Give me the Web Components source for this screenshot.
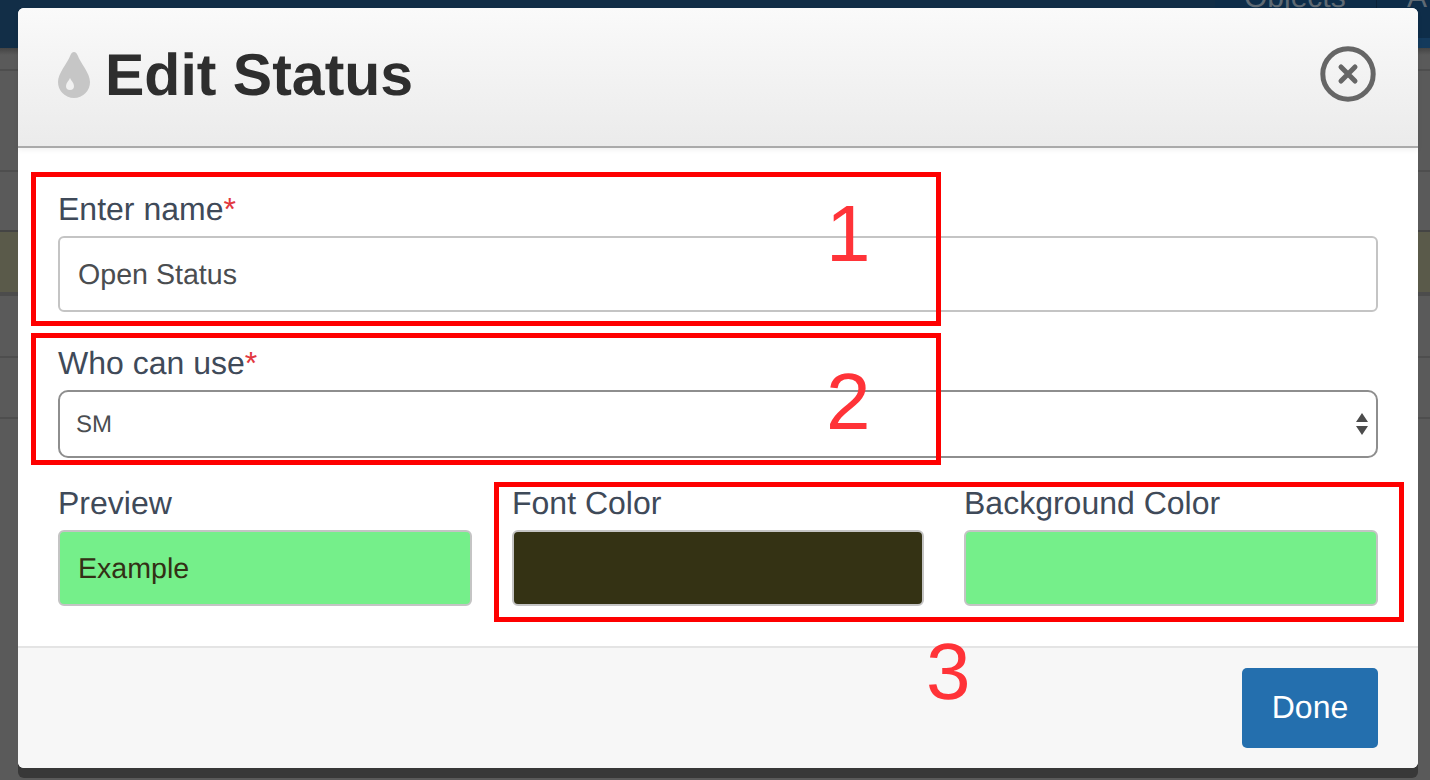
<!doctype html>
<html>
<head>
<meta charset="utf-8">
<title>Edit Status</title>
<style>
html, body { margin: 0; height: 100%; overflow: hidden; background: #5a5a5a; }
body { font-family: "Liberation Sans", Arial, sans-serif; text-rendering: geometricPrecision; }
</style>
</head>
<body>
<app-backdrop></app-backdrop>

<edit-modal heading="Edit Status">
  <form-field label="Enter name" required>
    <text-box>Open Status</text-box>
  </form-field>
  <form-field label="Who can use" required>
    <select-box>SM</select-box>
  </form-field>
  <color-row>
    <form-field label="Preview" last>
      <text-box color="#333015" fill="#75ef8a">Example</text-box>
    </form-field>
    <form-field label="Font Color" last>
      <text-box fill="#343214"></text-box>
    </form-field>
    <form-field label="Background Color" last>
      <text-box fill="#75ef8a"></text-box>
    </form-field>
  </color-row>
  <primary-button slot="footer">Done</primary-button>
</edit-modal>

<note-box number="1" box="31,172,910,154" digit="826,194"></note-box>
<note-box number="2" box="31,333,910,132" digit="826,362"></note-box>
<note-box number="3" box="494,482,910,140" digit="926,632"></note-box>

<script type="module">
const BACKDROP = document.createElement('template');
BACKDROP.innerHTML = /* html */ `
<style>
:host {
  position: fixed;
  inset: 0;
  display: block;
  overflow: hidden;
  background: #5a5a5a;
}

nav {
  display: flex;
  height: 48px;
  background: linear-gradient(#0e2d49 0, #0e2d49 38px, #143a5c 38px, #143a5c 100%);
}

.brand { width: 1215px; background: #122e47; }

.tab {
  box-sizing: border-box;
  width: 162px;
  height: 48px;
  overflow: hidden;
  border-right: 1px solid #0b2238;
  padding-left: 29px;
  font-size: 30px;
  line-height: 40px;
  color: #5f6a74;
  white-space: nowrap;
}

.tab span { display: block; margin-top: -22px; }

.tab.more { width: 53px; border: 0; padding-left: 30px; }

.shade {
  height: 7px;
  margin-bottom: -7px;
  background: linear-gradient(#444, #5a5a5a);
}

.row { border-bottom: 2px solid #4e4e4e; }
.r1 { height: 21px; }
.r2 { height: 99px; }
.r3 { height: 58px; border-bottom: 2px solid #444; }
.olive { height: 60px; background: #5a5a4a; border-bottom: 4px solid #4c4c4c; }
.r5 { height: 60px; }
.r6 { height: 59px; }
</style>
<nav>
  <div class="brand"></div>
  <div class="tab"><span>Objects</span></div>
  <div class="tab more"><span>A</span></div>
</nav>
<div class="shade"></div>
<div class="row r1"></div>
<div class="row r2"></div>
<div class="row r3"></div>
<div class="olive"></div>
<div class="row r5"></div>
<div class="row r6"></div>
`;

export class AppBackdropElement extends HTMLElement {
  constructor() {
    super();
    this.attachShadow({ mode: 'open' }).appendChild(BACKDROP.content.cloneNode(true));
  }
}

const MODAL = document.createElement('template');
MODAL.innerHTML = /* html */ `
<style>
:host {
  position: fixed;
  left: 18px;
  top: 8px;
  width: 1400px;
  height: 760px;
  display: flex;
  flex-direction: column;
  background: white;
  border-radius: 6px;
  box-shadow: 0 10px 0 #383838;
}

header {
  position: relative;
  box-sizing: border-box;
  height: 140px;
  display: flex;
  align-items: center;
  padding: 0 42px 6px 40px;
  background: linear-gradient(#fafafa, #ebebeb);
  border-bottom: 2px solid #aaa;
  border-radius: 6px 6px 0 0;
  box-shadow: 0 2px 5px rgb(0 0 0 / 6%);
}

.drop { flex: none; width: 32px; height: 46px; margin: 2px 15px 0 0; }

h1 {
  flex: 1;
  margin: 0;
  padding-top: 2px;
  font-size: 59px;
  line-height: 70px;
  font-weight: bold;
  color: #2e2e2e;
}

.close { flex: none; width: 56px; height: 56px; }

.body {
  flex: 1;
  padding: 39px 40px 0;
}

footer {
  box-sizing: border-box;
  height: 122px;
  display: flex;
  justify-content: flex-end;
  padding: 20px 40px;
  background: #f7f7f7;
  border-top: 2px solid #e4e4e4;
  border-radius: 0 0 6px 6px;
}
</style>
<header>
  <svg class="drop" viewBox="0 0 32 46">
    <path fill="#c6c6c6" d="M16 0c1.6 0 2.6 1 3.5 3C23 12 32 21 32 30a16 16 0 0 1-32 0C0 21 9 12 12.5 3 13.4 1 14.4 0 16 0Z"/>
    <path fill="#f1f1f1" d="M12 26c1 2.6 4 5 4 8a4 4 0 0 1-8 0c0-3 3-5.4 4-8Z"/>
  </svg>
  <h1></h1>
  <svg class="close" viewBox="0 0 56 56" fill="none" stroke="#666">
    <circle cx="28" cy="28" r="25.2" stroke-width="5"/>
    <path stroke-width="5" stroke-linecap="round" d="M21 21 35 35M35 21 21 35"/>
  </svg>
</header>
<div class="body"><slot></slot></div>
<footer><slot name="footer"></slot></footer>
`;

export class EditModalElement extends HTMLElement {
  /** @type {ShadowRoot} */
  #shadowRoot;

  constructor() {
    super();

    this.#shadowRoot = this.attachShadow({ mode: 'open' });
    this.#shadowRoot.appendChild(MODAL.content.cloneNode(true));
  }

  connectedCallback() {
    this.#shadowRoot.querySelector('h1').textContent = this.getAttribute('heading');
  }
}

const FIELD = document.createElement('template');
FIELD.innerHTML = /* html */ `
<style>
:host {
  display: block;
  margin-bottom: 29px;
}

:host([last]) { margin-bottom: 0; }

label {
  display: block;
  margin-bottom: 5px;
  font-size: 32px;
  line-height: 44px;
  color: #3f4a59;
  white-space: nowrap;
}

.star { color: #e2383f; display: none; }
:host([required]) .star { display: inline; }
</style>
<label><span class="text"></span><span class="star">*</span></label>
<slot></slot>
`;

export class FormFieldElement extends HTMLElement {
  /** @type {ShadowRoot} */
  #shadowRoot;

  constructor() {
    super();

    this.#shadowRoot = this.attachShadow({ mode: 'open' });
    this.#shadowRoot.appendChild(FIELD.content.cloneNode(true));
  }

  connectedCallback() {
    this.#shadowRoot.querySelector('.text').textContent = this.getAttribute('label');
  }
}

const TEXT_BOX = document.createElement('template');
TEXT_BOX.innerHTML = /* html */ `
<style>
:host {
  box-sizing: border-box;
  display: block;
  height: 76px;
  padding: 0 18px;
  border: 2px solid #c4c4c4;
  border-radius: 6px;
  font-size: 28.6px;
  line-height: 74px;
  color: #4a4d50;
  background: white;
}
</style>
<slot></slot>
`;

export class TextBoxElement extends HTMLElement {
  constructor() {
    super();
    this.attachShadow({ mode: 'open' }).appendChild(TEXT_BOX.content.cloneNode(true));
  }

  connectedCallback() {
    // Swatches and the preview pass their colours as attributes
    if (this.hasAttribute('fill')) this.style.background = this.getAttribute('fill');
    if (this.hasAttribute('color')) this.style.color = this.getAttribute('color');
  }
}

const SELECT_BOX = document.createElement('template');
SELECT_BOX.innerHTML = /* html */ `
<style>
:host {
  box-sizing: border-box;
  display: flex;
  align-items: center;
  justify-content: space-between;
  height: 68px;
  padding: 0 8px 0 16px;
  border: 2px solid #8e8e8e;
  border-radius: 10px;
  font-size: 24px;
  color: #4a4d50;
  background: white;
}

span { padding-top: 2px; }

svg { width: 12px; height: 22px; }
</style>
<span><slot></slot></span>
<svg viewBox="0 0 12 22" fill="#4c4c4c">
  <path d="M6 0 12 9H0ZM0 13H12L6 22Z"/>
</svg>
`;

export class SelectBoxElement extends HTMLElement {
  constructor() {
    super();
    this.attachShadow({ mode: 'open' }).appendChild(SELECT_BOX.content.cloneNode(true));
  }
}

const COLOR_ROW = document.createElement('template');
COLOR_ROW.innerHTML = /* html */ `
<style>
:host {
  display: grid;
  grid-template-columns: 414px 412px 414px;
  gap: 40px;
  margin-top: -6px;
}
</style>
<slot></slot>
`;

export class ColorRowElement extends HTMLElement {
  constructor() {
    super();
    this.attachShadow({ mode: 'open' }).appendChild(COLOR_ROW.content.cloneNode(true));
  }
}

const BUTTON = document.createElement('template');
BUTTON.innerHTML = /* html */ `
<style>
:host {
  display: block;
  box-sizing: border-box;
  width: 136px;
  height: 80px;
  border-radius: 5px;
  background: #246fae;
  color: white;
  font-size: 32px;
  line-height: 78px;
  text-align: center;
  cursor: pointer;
}
</style>
<slot></slot>
`;

export class PrimaryButtonElement extends HTMLElement {
  constructor() {
    super();
    this.attachShadow({ mode: 'open' }).appendChild(BUTTON.content.cloneNode(true));
  }
}

const NOTE = document.createElement('template');
NOTE.innerHTML = /* html */ `
<style>
:host {
  position: fixed;
  inset: 0;
  display: block;
  pointer-events: none;
}

.box {
  position: absolute;
  box-sizing: border-box;
  border: 5px solid #fe0000;
}

.digit {
  position: absolute;
  font-size: 80px;
  line-height: 80px;
  color: #ff3338;
}
</style>
<div class="box"></div>
<div class="digit"></div>
`;

// Hand-drawn annotation on top of the screenshot: a red frame and its number
export class NoteBoxElement extends HTMLElement {
  /** @type {ShadowRoot} */
  #shadowRoot;

  constructor() {
    super();

    this.#shadowRoot = this.attachShadow({ mode: 'open' });
    this.#shadowRoot.appendChild(NOTE.content.cloneNode(true));
  }

  connectedCallback() {
    const [x, y, w, h] = this.getAttribute('box').split(',');
    const [dx, dy] = this.getAttribute('digit').split(',');

    const box = this.#shadowRoot.querySelector('.box');
    box.style.cssText = `left:${x}px;top:${y}px;width:${w}px;height:${h}px`;

    const digit = this.#shadowRoot.querySelector('.digit');
    digit.style.cssText = `left:${dx}px;top:${dy}px`;
    digit.textContent = this.getAttribute('number');
  }
}

window.customElements.define('app-backdrop', AppBackdropElement);
window.customElements.define('edit-modal', EditModalElement);
window.customElements.define('form-field', FormFieldElement);
window.customElements.define('text-box', TextBoxElement);
window.customElements.define('select-box', SelectBoxElement);
window.customElements.define('color-row', ColorRowElement);
window.customElements.define('primary-button', PrimaryButtonElement);
window.customElements.define('note-box', NoteBoxElement);
</script>
</body>
</html>
